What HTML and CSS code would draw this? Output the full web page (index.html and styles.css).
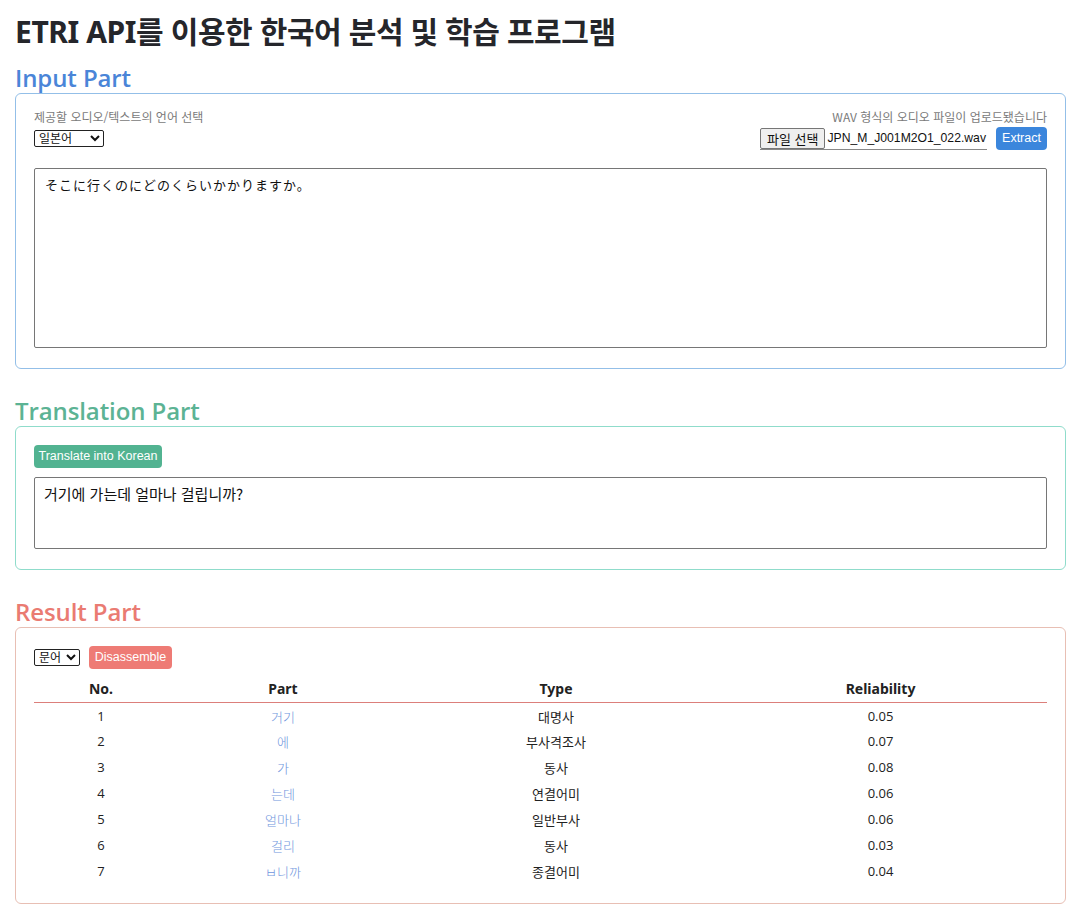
FILE: index.html
```html
<!DOCTYPE html>
<html lang="ko">
<head>
<meta charset="utf-8">
<title>ETRI API</title>
<link rel="stylesheet" href="styles.css">
</head>
<body>
<h1 class="title">ETRI API를 이용한 한국어 분석 및 학습 프로그램</h1>

<h2 class="sec sec-input">Input Part</h2>
<section class="card card-input">
  <div class="toprow">
    <div class="col-left">
      <div class="hint">제공할 오디오/텍스트의 언어 선택</div>
      <select class="sel sel-lang"><option>일본어</option></select>
    </div>
    <div class="col-right">
      <div class="hint">WAV 형식의 오디오 파일이 업로드됐습니다</div>
      <div class="filerow">
        <span class="file"><span class="filebtn">파일 선택</span><span class="filename">JPN_M_J001M2O1_022.wav</span></span>
        <button class="btn btn-blue">Extract</button>
      </div>
    </div>
  </div>
  <div class="textarea ta-big">そこに行くのにどのくらいかかりますか。</div>
</section>

<h2 class="sec sec-trans">Translation Part</h2>
<section class="card card-trans">
  <button class="btn btn-green">Translate into Korean</button>
  <div class="textarea ta-small">거기에 가는데 얼마나 걸립니까?</div>
</section>

<h2 class="sec sec-result">Result Part</h2>
<section class="card card-result">
  <div class="ctrlrow">
    <select class="sel sel-type"><option>문어</option></select>
    <button class="btn btn-red">Disassemble</button>
  </div>
  <table class="tbl">
    <thead>
      <tr><th class="c1">No.</th><th class="c2">Part</th><th class="c3">Type</th><th class="c4">Reliability</th></tr>
    </thead>
    <tbody>
      <tr><td>1</td><td class="part">거기</td><td class="ko">대명사</td><td>0.05</td></tr>
      <tr><td>2</td><td class="part">에</td><td class="ko">부사격조사</td><td>0.07</td></tr>
      <tr><td>3</td><td class="part">가</td><td class="ko">동사</td><td>0.08</td></tr>
      <tr><td>4</td><td class="part">는데</td><td class="ko">연결어미</td><td>0.06</td></tr>
      <tr><td>5</td><td class="part">얼마나</td><td class="ko">일반부사</td><td>0.06</td></tr>
      <tr><td>6</td><td class="part">걸리</td><td class="ko">동사</td><td>0.03</td></tr>
      <tr><td>7</td><td class="part">ㅂ니까</td><td class="ko">종결어미</td><td>0.04</td></tr>
    </tbody>
  </table>
</section>
</body>
</html>
```

FILE: styles.css
```css
* { box-sizing: border-box; }
body {
  margin: 0;
  padding: 12px 25px 17px 15px;
  font-family: "Noto Sans", "Noto Sans CJK KR", sans-serif;
  color: #222;
  background: #fff;
}
.title {
  margin: 0;
  font-family: "Noto Sans", "Noto Sans CJK KR", sans-serif;
  font-weight: 700;
  font-size: 30px;
  line-height: 40px;
  height: 40px;
  color: #25262b;
  letter-spacing: -0.4px;
}
.sec {
  margin: 0;
  font-family: "Open Sans", "Noto Sans CJK KR", sans-serif;
  font-weight: 600;
  font-size: 24px;
  line-height: 30px;
  height: 30px;
  letter-spacing: -0.1px;
}
.title + .sec { margin-top: 11px; }
.sec-input { color: #4a85d8; }
.sec-trans { color: #5cb394; margin-top: 27px; }
.sec-result { color: #ea7b72; margin-top: 27px; }

.card {
  border: 1px solid #9cc3ea;
  border-radius: 6px;
  padding: 15px 18px 20px 18px;
}
.card-input { border-color: #93bfe8; height: 276px; }
.card-trans { border-color: #8fdccb; height: 144px; padding-top: 18px; }
.card-result { border-color: #e8bfb4; height: 277px; padding-top: 18px; }

.toprow {
  display: flex;
  justify-content: space-between;
  align-items: flex-start;
}
.hint {
  font-family: "Noto Sans CJK KR", sans-serif;
  font-size: 12px;
  line-height: 16px;
  color: #7a7a7a;
}
.col-right { display: flex; flex-direction: column; align-items: flex-end; }
.sel {
  font-family: "Liberation Sans", "Noto Sans CJK KR", sans-serif;
  font-size: 12px;
  height: 17px;
  padding: 0;
  border: 1px solid #222;
  border-radius: 2px;
  background: #fff;
  color: #111;
  margin-top: 5px;
}
.sel-lang { width: 70px; }
.sel-type { width: 46px; margin-top: 0; }
.filerow { display: flex; align-items: center; gap: 9px; margin-top: 2px; }
.file {
  display: flex;
  align-items: center;
  gap: 2px;
  border-bottom: 1px solid #888;
  height: 23px;
}
.filebtn {
  font-family: "Noto Sans CJK KR", sans-serif;
  font-size: 13px;
  line-height: 19px;
  padding: 0 6px;
  background: #efefef;
  border: 1px solid #767676;
  border-radius: 2px;
  color: #111;
}
.filename {
  font-family: "Liberation Sans", sans-serif;
  font-size: 12.2px;
  padding-right: 1px;
  color: #111;
}
.btn {
  font-family: "Liberation Sans", sans-serif;
  font-size: 12.5px;
  color: #fff;
  border: none;
  border-radius: 4px;
  height: 23px;
  padding: 0 7px;
  line-height: 23px;
}
.btn-blue { background: #3b86dc; width: 51px; padding: 0; }
.btn-green { background: #52b391; width: 128px; padding: 0; display: block; }
.btn-red { background: #ee7b75; width: 83px; padding: 0; }

.textarea {
  border: 1px solid #767676;
  border-radius: 2px;
  font-family: "Noto Sans CJK JP", "Noto Sans CJK KR", monospace;
  font-size: 13px;
  color: #111;
  padding: 6px 10px;
}
.ta-big { margin-top: 18px; height: 180px; letter-spacing: 1px; }
.ta-small {
  margin-top: 9px;
  height: 72px;
  font-family: "Noto Sans CJK KR", sans-serif;
  font-size: 15px;
  padding: 5px 9px;
}

.ctrlrow { display: flex; align-items: center; gap: 9px; }
.tbl {
  width: 100%;
  border-collapse: collapse;
  margin-top: 8px;
  font-family: "Open Sans", "Noto Sans CJK KR", sans-serif;
  font-size: 13px;
  color: #222;
}
.tbl th {
  font-family: "Noto Sans", "Noto Sans CJK KR", sans-serif;
  font-weight: 700;
  font-size: 14px;
  height: 25px;
  border-bottom: 1px solid #dc7f7b;
  padding: 0 0 2px;
  vertical-align: middle;
}
.tbl td {
  text-align: center;
  height: 26px;
  padding: 0;
  vertical-align: middle;
}
.tbl tbody tr:first-child td { padding-top: 2px; }
.c1 { width: 134px; }
.c2 { width: 230px; }
.c3 { width: 316px; }
.c4 { width: 333px; }
.tbl td.part { color: #6f95dd; font-family: "Noto Sans CJK KR", sans-serif; font-weight: 300; }
.tbl td.ko { font-family: "Noto Sans CJK KR", sans-serif; font-weight: 400; }
```
